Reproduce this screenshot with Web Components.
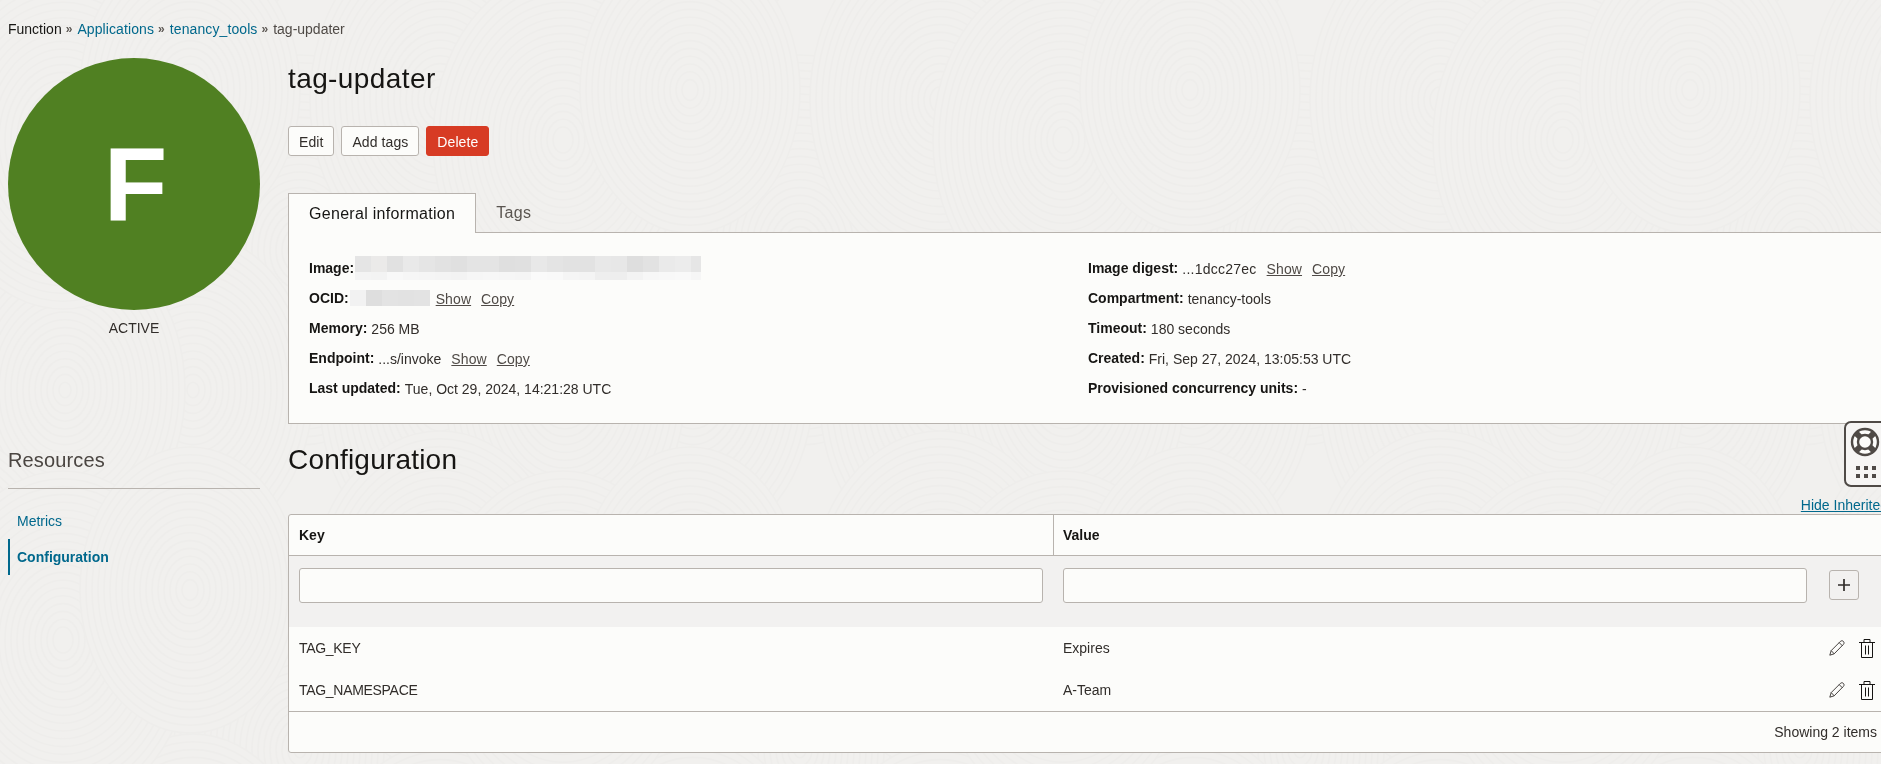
<!DOCTYPE html>
<html lang="en">
<head>
<meta charset="utf-8">
<title>tag-updater</title>
<style>
  html { background: #f1f0ee; }
  html, body { margin: 0; height: 100%; overflow: hidden; }
  body { font-family: "Liberation Sans", Arial, sans-serif; color: #312d2a; }
</style>
</head>
<body>
<page-backdrop></page-backdrop>
<function-page>
  <bread-crumbs slot="crumbs">
    <span>Function</span><a>Applications</a><a>tenancy_tools</a><span class="last">tag-updater</span>
  </bread-crumbs>

  <status-avatar slot="side" letter="F" status="ACTIVE"></status-avatar>
  <resource-menu slot="side" heading="Resources">
    <menu-link>Metrics</menu-link>
    <menu-link active>Configuration</menu-link>
  </resource-menu>

  <page-header slot="main" title-text="tag-updater">
    <ui-button>Edit</ui-button>
    <ui-button>Add tags</ui-button>
    <ui-button danger>Delete</ui-button>
  </page-header>

  <tab-strip slot="main">
    <tab-item active>General information</tab-item>
    <tab-item>Tags</tab-item>
  </tab-strip>

  <info-panel slot="main">
    <info-field label="Image:" tight><blur-block top="e5,ebeae9,e1,e9,e5,e2,e0,e4,e4,df,e0,e8,e4,e2,e2,e8,e7,de,e2,ea,ec,e6" bottom="f4,f3,f8,f6,f5,f4,f3,f6,f7,f6,f5,fa,f9,f5,f4,ee,ee,f3,f7,f8,f9,f6" last="10"></blur-block></info-field>
    <info-field label="Image digest:"><span style="letter-spacing:.25px">...1dcc27ec</span><action-link>Show</action-link><action-link>Copy</action-link></info-field>
    <info-field label="OCID:" tight><blur-block class="short" top="f2,de,e3,e2,e3"></blur-block><action-link>Show</action-link><action-link>Copy</action-link></info-field>
    <info-field label="Compartment:">tenancy-tools</info-field>
    <info-field label="Memory:">256 MB</info-field>
    <info-field label="Timeout:">180 seconds</info-field>
    <info-field label="Endpoint:">...s/invoke<action-link>Show</action-link><action-link>Copy</action-link></info-field>
    <info-field label="Created:">Fri, Sep 27, 2024, 13:05:53 UTC</info-field>
    <info-field label="Last updated:">Tue, Oct 29, 2024, 14:21:28 UTC</info-field>
    <info-field label="Provisioned concurrency units:">-</info-field>
  </info-panel>

  <section-title slot="main" link="Hide Inherited">Configuration</section-title>

  <config-table slot="main" footer="Showing 2 items">
    <config-row key="TAG_KEY" value="Expires"></config-row>
    <config-row key="TAG_NAMESPACE" value="A-Team"></config-row>
  </config-table>
</function-page>
<help-widget></help-widget>

<script>
class PageBackdrop extends HTMLElement {
  connectedCallback() {
    const root = this.shadowRoot || this.attachShadow({ mode: 'open' });
    const swirls = [
      [300, 250, 150], [193, 390, 120], [65, 390, 120],
      [63, 140, 130], [440, 100, 130], [440, 400, 120], [190, 90, 110]
    ];
    let shapes = '';
    // tile repeats every 500px, drawn straight into the svg
    for (let ty = -500; ty <= 1000; ty += 500) {
      for (let tx = -500; tx <= 2000; tx += 500) {
        swirls.forEach(([sx, sy, r]) => {
          const cx = sx + tx;
          const cy = sy + ty;
          if (cx + r < 0 || cx - r > 1881 || cy + r * 1.3 < 0 || cy - r * 1.3 > 764) return;
          shapes += `<ellipse class="base" cx="${cx}" cy="${cy}" rx="${r}" ry="${r * 1.3}"/>`;
          for (let q = r; q > 4; q -= 6) {
            shapes += `<ellipse cx="${cx}" cy="${cy}" rx="${q}" ry="${q * 1.3}"/>`;
          }
        });
      }
    }
    root.innerHTML = `
      <style>
        :host { position: fixed; inset: 0; z-index: -1; display: block; }
        svg { display: block; width: 100%; height: 100%; }
        ellipse { stroke: #eeedeb; stroke-width: 1.6; fill: none; }
        ellipse.base { fill: #f1f0ee; stroke: none; }
      </style>
      <svg aria-hidden="true"><rect width="100%" height="100%" fill="#f1f0ee"/>${shapes}</svg>`;
  }
}

class FunctionPage extends HTMLElement {
  constructor() {
    super();
    this.attachShadow({ mode: 'open' });
    this.shadowRoot.innerHTML = `
      <style>
        :host { display: block; width: 1900px; }
        .columns { display: flex; gap: 28px; padding-left: 8px; }
        .side { width: 252px; flex: none; }
        .main { width: 1600px; flex: none; }
      </style>
      <slot name="crumbs"></slot>
      <div class="columns">
        <div class="side"><slot name="side"></slot></div>
        <div class="main"><slot name="main"></slot></div>
      </div>`;
  }
}

class BreadCrumbs extends HTMLElement {
  constructor() {
    super();
    this.attachShadow({ mode: 'open' });
    this.shadowRoot.innerHTML = `
      <style>
        :host { display: flex; align-items: center; height: 58px; padding: 0 0 0 8px; font-size: 14px; color: #161513; box-sizing: border-box; }
        ::slotted(a) { color: #00688c; letter-spacing: .1px; }
        ::slotted(.last) { color: #4f4a46; }
      </style>
      <slot></slot>`;
  }
  connectedCallback() {
    const items = [...this.children];
    items.forEach((item, i) => {
      if (i === items.length - 1) return;
      const sep = document.createElement('span');
      sep.textContent = '»';
      sep.style.cssText = 'color:#5f5a56;font-size:12px;font-weight:bold;margin:0 5px 0 4px';
      item.after(sep);
    });
  }
}

class StatusAvatar extends HTMLElement {
  constructor() {
    super();
    this.attachShadow({ mode: 'open' });
  }
  connectedCallback() {
    this.shadowRoot.innerHTML = `
      <style>
        :host { display: block; text-align: center; }
        .disc { width: 252px; height: 252px; box-sizing: border-box; padding-left: 3px; border-radius: 50%; background: #508022; color: #fff; display: flex; align-items: center; justify-content: center; font-size: 104px; font-weight: bold; line-height: 1; }
        .status { margin-top: 9px; font-size: 14px; line-height: 18px; color: #312d2a; }
      </style>
      <div class="disc">${this.getAttribute('letter')}</div>
      <div class="status">${this.getAttribute('status')}</div>`;
  }
}

class ResourceMenu extends HTMLElement {
  constructor() {
    super();
    this.attachShadow({ mode: 'open' });
  }
  connectedCallback() {
    this.shadowRoot.innerHTML = `
      <style>
        :host { display: block; margin-top: 111px; }
        h2 { margin: 0; font-size: 20px; line-height: 24px; font-weight: normal; letter-spacing: .15px; color: #4a4541; padding-bottom: 16px; border-bottom: 1px solid #b8b3ae; }
        .items { display: flex; flex-direction: column; padding-top: 14px; }
      </style>
      <h2>${this.getAttribute('heading')}</h2>
      <div class="items"><slot></slot></div>`;
  }
}

class MenuLink extends HTMLElement {
  constructor() {
    super();
    this.attachShadow({ mode: 'open' });
    this.shadowRoot.innerHTML = `
      <style>
        :host { display: flex; align-items: center; height: 36px; padding-left: 7px; border-left: 2px solid transparent; font-size: 14px; color: #00688c; }
        :host([active]) { border-left-color: #00688c; font-weight: bold; }
      </style>
      <slot></slot>`;
  }
}

class PageHeader extends HTMLElement {
  constructor() {
    super();
    this.attachShadow({ mode: 'open' });
  }
  connectedCallback() {
    this.shadowRoot.innerHTML = `
      <style>
        :host { display: block; }
        h1 { margin: 0; height: 68px; padding-top: 1px; box-sizing: border-box; font-size: 28px; line-height: 40px; font-weight: normal; letter-spacing: .4px; color: #161513; }
        .actions { display: flex; gap: 7px; }
      </style>
      <h1>${this.getAttribute('title-text')}</h1>
      <div class="actions"><slot></slot></div>`;
  }
}

class UiButton extends HTMLElement {
  constructor() {
    super();
    this.attachShadow({ mode: 'open' });
    this.shadowRoot.innerHTML = `
      <style>
        :host { display: flex; align-items: center; height: 30px; padding: 2px 10px 0; box-sizing: border-box; border: 1px solid #b8b3ae; border-radius: 3px; background: #fcfcfa; font-size: 14px; letter-spacing: .08px; color: #312d2a; }
        :host([danger]) { background: #d73b24; border-color: #d73b24; color: #fff; }
      </style>
      <slot></slot>`;
  }
}

class TabStrip extends HTMLElement {
  constructor() {
    super();
    this.attachShadow({ mode: 'open' });
    this.shadowRoot.innerHTML = `
      <style>
        :host { display: flex; margin-top: 37px; height: 39px; position: relative; z-index: 1; }
      </style>
      <slot></slot>`;
  }
}

class TabItem extends HTMLElement {
  constructor() {
    super();
    this.attachShadow({ mode: 'open' });
    this.shadowRoot.innerHTML = `
      <style>
        :host { display: flex; align-items: center; height: 39px; padding: 0 20px; box-sizing: border-box; font-size: 16px; letter-spacing: .3px; color: #5a5550; }
        :host([active]) { height: 40px; background: #fcfcfa; color: #161513; border: 1px solid #b8b3ae; border-bottom: 0; }
      </style>
      <slot></slot>`;
  }
}

class InfoPanel extends HTMLElement {
  constructor() {
    super();
    this.attachShadow({ mode: 'open' });
    this.shadowRoot.innerHTML = `
      <style>
        :host { display: grid; grid-template-columns: 779px 1fr; grid-auto-rows: 30px; box-sizing: border-box; padding: 20px 20px 19px; background: #fcfcfa; border: 1px solid #b8b3ae; height: 192px; }
      </style>
      <slot></slot>`;
  }
}

class InfoField extends HTMLElement {
  constructor() {
    super();
    this.attachShadow({ mode: 'open' });
  }
  connectedCallback() {
    this.shadowRoot.innerHTML = `
      <style>
        :host { display: flex; align-items: center; font-size: 14px; color: #312d2a; white-space: nowrap; }
        b { color: #161513; margin-right: 4px; }
        :host([tight]) b { margin-right: 1px; }
        .value { display: flex; align-items: center; padding-top: 2px; }
        ::slotted(blur-block) { margin-top: -2px; }
        ::slotted(blur-block.short) { margin-right: -4px; }
      </style>
      <b>${this.getAttribute('label')}</b><div class="value"><slot></slot></div>`;
  }
}

class ActionLink extends HTMLElement {
  constructor() {
    super();
    this.attachShadow({ mode: 'open' });
    this.shadowRoot.innerHTML = `
      <style>
        :host { display: inline; margin-left: 10px; text-decoration: underline; letter-spacing: .1px; color: #4f4a46; }
      </style>
      <slot></slot>`;
  }
}

class BlurBlock extends HTMLElement {
  constructor() {
    super();
    this.attachShadow({ mode: 'open' });
  }
  connectedCallback() {
    const lastWidth = this.getAttribute('last') || 16;
    const strip = (name, h) => {
      const raw = this.getAttribute(name);
      if (!raw) return '';
      const cells = raw.split(',');
      return `<div class="strip" style="height:${h}px">${cells
        .map((c, i) => {
          const grey = c.length === 2 ? c + c + c : c;
          const w = i === cells.length - 1 ? lastWidth : 16;
          return `<i style="background:#${grey};width:${w}px"></i>`;
        })
        .join('')}</div>`;
    };
    this.shadowRoot.innerHTML = `
      <style>
        :host { display: block; }
        .strip { display: flex; }
        i { display: block; height: 100%; }
      </style>
      ${strip('top', 16)}${strip('bottom', 8)}`;
  }
}

class SectionTitle extends HTMLElement {
  constructor() {
    super();
    this.attachShadow({ mode: 'open' });
  }
  connectedCallback() {
    this.shadowRoot.innerHTML = `
      <style>
        :host { display: block; }
        h2 { margin: 0; padding-top: 16px; font-size: 28px; line-height: 40px; font-weight: normal; letter-spacing: .2px; color: #161513; }
        .tools { display: flex; justify-content: flex-end; align-items: flex-end; height: 34px; box-sizing: border-box; padding-bottom: 1px; font-size: 14px; line-height: 16px; }
        a { color: #00688c; text-decoration: underline; white-space: nowrap; }
      </style>
      <h2><slot></slot></h2>
      <div class="tools"><a>${this.getAttribute('link')}</a></div>`;
  }
}

class ConfigTable extends HTMLElement {
  constructor() {
    super();
    this.attachShadow({ mode: 'open' });
  }
  connectedCallback() {
    this.shadowRoot.innerHTML = `
      <style>
        :host { display: block; background: #fcfcfa; border: 1px solid #b8b3ae; border-radius: 3px; font-size: 14px; color: #312d2a; }
        .head { display: grid; grid-template-columns: 764px 1fr; height: 40px; border-bottom: 1px solid #b8b3ae; font-weight: bold; color: #161513; }
        .head div { display: flex; align-items: center; padding-left: 10px; }
        .head div + div { border-left: 1px solid #b8b3ae; padding-left: 9px; }
        .add { display: grid; grid-template-columns: 744px 744px 30px; column-gap: 20px; align-items: start; height: 71px; box-sizing: border-box; padding: 12px 0 0 10px; background: #f2f1f0; }
        .field { height: 35px; box-sizing: border-box; background: #fcfcfa; border: 1px solid #b8b3ae; border-radius: 3px; }
        .plus { margin: 2px 0 0 2px; width: 30px; height: 30px; box-sizing: border-box; border: 1px solid #b8b3ae; border-radius: 3px; display: flex; align-items: center; justify-content: center; }
        .rows { border-bottom: 1px solid #b8b3ae; }
        .foot { height: 40px; display: flex; align-items: center; justify-content: flex-end; padding-right: 10px; }
      </style>
      <div class="head"><div>Key</div><div>Value</div></div>
      <div class="add">
        <div class="field"></div>
        <div class="field"></div>
        <div class="plus"><svg width="14" height="14" viewBox="0 0 14 14"><path d="M7 1v12M1 7h12" stroke="#312d2a" stroke-width="1.7" fill="none"/></svg></div>
      </div>
      <div class="rows"><slot></slot></div>
      <div class="foot">${this.getAttribute('footer')}</div>`;
  }
}

class ConfigRow extends HTMLElement {
  constructor() {
    super();
    this.attachShadow({ mode: 'open' });
  }
  connectedCallback() {
    this.shadowRoot.innerHTML = `
      <style>
        :host { display: grid; grid-template-columns: 764px 1fr auto; align-items: center; height: 42px; padding-right: 12px; }
        .cell { padding-left: 10px; }
        .cell.key { letter-spacing: -.3px; }
        .tools { display: flex; align-items: center; gap: 14px; }
        svg { display: block; fill: none; }
      </style>
      <div class="cell key">${this.getAttribute('key')}</div>
      <div class="cell">${this.getAttribute('value')}</div>
      <div class="tools">
        <svg width="16" height="16" viewBox="0 0 16 16" stroke="#312d2a" stroke-width=".9"><path d="M.8 15.2 2.2 10.6 11.4 1.4c1-.9 2.2-.8 3 0s.9 2 0 3L5.2 13.8zM10.2 2.6l3.2 3.2M2.2 10.6l3 3.2"/></svg>
        <svg width="16" height="19" viewBox="0 0 16 19" stroke="#161513"><path d="M0 3.5h16M5 3.5v-3h6v3M2.5 3.5v15h11v-15M6.5 6.5v9M9.5 6.5v9"/></svg>
      </div>`;
  }
}

class HelpWidget extends HTMLElement {
  constructor() {
    super();
    this.attachShadow({ mode: 'open' });
    this.shadowRoot.innerHTML = `
      <style>
        :host { position: fixed; left: 1844px; top: 421px; width: 60px; height: 66px; box-sizing: border-box; border: 2px solid #4f4a46; border-radius: 7px; background: #f6f5f4; display: block; }
        svg { display: block; position: absolute; left: 5px; top: 5px; overflow: visible; }
      </style>
      <svg width="30" height="52" viewBox="0 0 30 52">
        <circle cx="14" cy="14" r="13" fill="#fcfcfa" stroke="#4f4a46" stroke-width="2.4"/>
        <circle cx="14" cy="14" r="7" fill="#fcfcfa" stroke="#4f4a46" stroke-width="2.4"/>
        <path d="M4.8 4.8 9 9M23.2 4.8 19 9M4.8 23.2 9 19M23.2 23.2 19 19" stroke="#4f4a46" stroke-width="6"/>
        <path d="M5 38h4v4H5zM13 38h4v4h-4zM21 38h4v4h-4zM5 46h4v4H5zM13 46h4v4h-4zM21 46h4v4h-4z" fill="#4f4a46"/>
      </svg>`;
  }
}

customElements.define('page-backdrop', PageBackdrop);
customElements.define('function-page', FunctionPage);
customElements.define('bread-crumbs', BreadCrumbs);
customElements.define('status-avatar', StatusAvatar);
customElements.define('resource-menu', ResourceMenu);
customElements.define('menu-link', MenuLink);
customElements.define('page-header', PageHeader);
customElements.define('ui-button', UiButton);
customElements.define('tab-strip', TabStrip);
customElements.define('tab-item', TabItem);
customElements.define('info-panel', InfoPanel);
customElements.define('info-field', InfoField);
customElements.define('action-link', ActionLink);
customElements.define('blur-block', BlurBlock);
customElements.define('section-title', SectionTitle);
customElements.define('config-table', ConfigTable);
customElements.define('config-row', ConfigRow);
customElements.define('help-widget', HelpWidget);
</script>
</body>
</html>
